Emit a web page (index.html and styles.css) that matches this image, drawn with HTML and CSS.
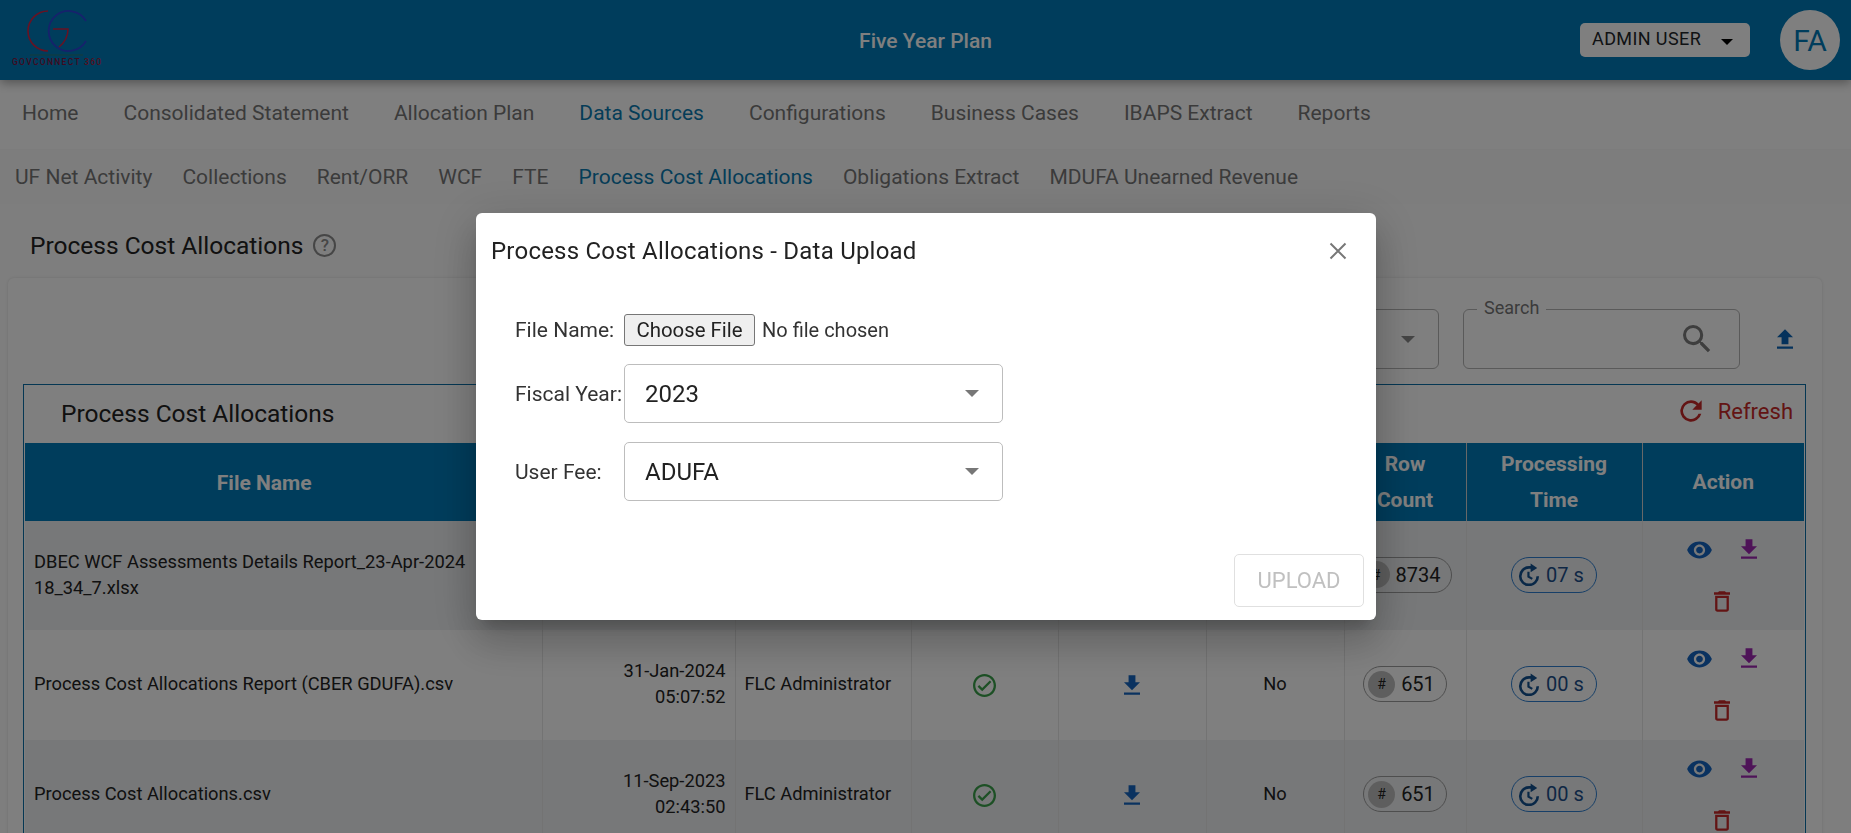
FILE: index.html
```html
<!DOCTYPE html>
<html lang="en">
<head>
    <meta charset="UTF-8">
    <meta name="viewport" content="width=device-width, initial-scale=1.0">
    <title>Five Year Plan</title>
    <link rel="stylesheet" href="styles.css">
</head>
<body>
    <svg class="icon-defs" width="0" height="0">
        <defs>
            <symbol id="i-eye" viewBox="1 4 22 16"><path d="M12 4.500C7 4.500 2.730 7.610 1 12c1.730 4.390 6 7.500 11 7.500s9.270-3.110 11-7.500c-1.730-4.390-6-7.500-11-7.500zM12 17c-2.760 0-5-2.240-5-5s2.240-5 5-5 5 2.240 5 5-2.240 5-5 5zm0-8c-1.660 0-3 1.340-3 3s1.340 3 3 3 3-1.340 3-3-1.340-3-3-3z"/></symbol>
            <symbol id="i-down" viewBox="5 3 14 17"><path d="M19 9h-4V3H9v6H5l7 7 7-7zM5 18v2h14v-2H5z"/></symbol>
            <symbol id="i-up" viewBox="5 3 14 17"><path d="M9 16h6v-6h4l-7-7-7 7h4v6zm-4 2h14v2H5v-2z"/></symbol>
            <symbol id="i-trash" viewBox="5 3 14 18"><path d="M6 19c0 1.100.9 2 2 2h8c1.100 0 2-.9 2-2V7H6v12zM8 9h8v10H8V9zm7.500-5l-1-1h-5l-1 1H5v2h14V4h-3.500z"/></symbol>
            <symbol id="i-check" viewBox="2 2 20 20"><path d="M12 2C6.480 2 2 6.480 2 12s4.480 10 10 10 10-4.480 10-10S17.520 2 12 2zm0 18c-4.410 0-8-3.590-8-8s3.590-8 8-8 8 3.590 8 8-3.590 8-8 8zm4.590-12.420L10 14.170l-2.590-2.580L6 13l4 4 8-8-1.410-1.420z"/></symbol>
            <symbol id="i-timer" viewBox="2 1 20 21">
                <path d="M20 13a8 8 0 1 1-8-8h2.500" fill="none" stroke="currentColor" stroke-width="2.400"/>
                <path d="M13.500 1.500l6 4-6 4z" fill="currentColor"/>
                <path d="M11.500 9v4.500l3.500 2" fill="none" stroke="currentColor" stroke-width="2"/>
            </symbol>
        </defs>
    </svg>

    <header class="topbar">
        <div class="logo">
            <svg width="90" height="50" viewBox="0 0 90 50" fill="none">
                <path d="M36 3A20 20 0 1 0 36 43" stroke="#d02444" stroke-width="1.600"/>
                <path d="M74 13A20 20 0 1 0 74 33" stroke="#2c44d8" stroke-width="1.800"/>
                <path d="M41 21h15c0 8-4 14-9 18" stroke="#d02444" stroke-width="1.500"/>
                <path d="M18 47h53" stroke="#1c7a8c" stroke-width="1.500"/>
            </svg>
            <span class="logo-text">GOVCONNECT <em>360</em></span>
        </div>
        <div class="app-title">Five Year Plan</div>
        <div class="user-area">
            <div class="user-btn"><span>ADMIN USER</span><i class="caret"></i></div>
            <div class="avatar">FA</div>
        </div>
    </header>

    <nav class="nav-main">
        <a>Home</a>
        <a>Consolidated Statement</a>
        <a>Allocation Plan</a>
        <a class="active">Data Sources</a>
        <a>Configurations</a>
        <a>Business Cases</a>
        <a>IBAPS Extract</a>
        <a>Reports</a>
    </nav>
    <nav class="nav-sub">
        <a>UF Net Activity</a>
        <a>Collections</a>
        <a>Rent/ORR</a>
        <a>WCF</a>
        <a>FTE</a>
        <a class="active">Process Cost Allocations</a>
        <a>Obligations Extract</a>
        <a>MDUFA Unearned Revenue</a>
    </nav>

    <main class="content">
        <div class="page-title">
            <h1>Process Cost Allocations</h1>
            <span class="help">?</span>
        </div>

        <section class="card">
            <div class="filters">
                <div class="field field-select"><i class="caret caret-dark"></i></div>
                <div class="field field-search">
                    <span class="field-label">Search</span>
                    <svg width="28" height="28" viewBox="3 3 18 18" fill="#7c7c7c"><path d="M15.500 14h-.79l-.28-.27A6.470 6.470 0 0 0 16 9.500 6.500 6.500 0 1 0 9.500 16c1.610 0 3.090-.59 4.230-1.570l.27.28v.79l5 4.990L20.490 19l-4.990-5zm-6 0C7.010 14 5 11.990 5 9.500S7.010 5 9.500 5 14 7.010 14 9.500 11.990 14 9.500 14z"/></svg>
                </div>
                <svg class="upload-icon" width="16" height="20"><use href="#i-up"/></svg>
            </div>

            <div class="table-box">
                <div class="table-head">
                    <h2>Process Cost Allocations</h2>
                    <div class="refresh">
                        <svg width="22" height="24" viewBox="4 3 16 18" fill="#c62828"><path d="M17.650 6.350A7.960 7.960 0 0 0 12 4a8 8 0 1 0 7.730 10h-2.080A6 6 0 1 1 12 6c1.660 0 3.140.69 4.220 1.780L13 11h7V4l-2.350 2.350z"/></svg>
                        <span>Refresh</span>
                    </div>
                </div>
                <table class="grid">
                    <colgroup>
                        <col class="c-file"><col class="c-date"><col class="c-user"><col class="c-status"><col class="c-dl"><col class="c-flag"><col class="c-rows"><col class="c-time"><col class="c-action">
                    </colgroup>
                    <thead>
                        <tr>
                            <th>File Name</th><th></th><th></th><th></th><th></th><th></th>
                            <th>Row<br>Count</th><th>Processing<br>Time</th><th>Action</th>
                        </tr>
                    </thead>
                    <tbody>
                        <tr class="row-first">
                            <td>DBEC WCF Assessments Details Report_23-Apr-2024 18_34_7.xlsx</td>
                            <td></td><td></td><td></td><td></td><td></td>
                            <td class="center"><span class="pill"><b>#</b>8734</span></td>
                            <td class="center"><span class="pill pill-time"><svg width="22" height="23"><use href="#i-timer"/></svg>07 s</span></td>
                            <td class="actions">
                                <svg class="a-eye" width="25" height="18"><use href="#i-eye"/></svg>
                                <svg class="a-get" width="16" height="20"><use href="#i-down"/></svg>
                                <svg class="a-del" width="16" height="21"><use href="#i-trash"/></svg>
                            </td>
                        </tr>
                        <tr>
                            <td>Process Cost Allocations Report (CBER GDUFA).csv</td>
                            <td class="date">31-Jan-2024<br>05:07:52</td>
                            <td>FLC Administrator</td>
                            <td class="center"><svg class="ok" width="23" height="23"><use href="#i-check"/></svg></td>
                            <td class="center"><svg class="dl" width="16" height="20"><use href="#i-down"/></svg></td>
                            <td class="center">No</td>
                            <td class="center"><span class="pill"><b>#</b>651</span></td>
                            <td class="center"><span class="pill pill-time"><svg width="22" height="23"><use href="#i-timer"/></svg>00 s</span></td>
                            <td class="actions">
                                <svg class="a-eye" width="25" height="18"><use href="#i-eye"/></svg>
                                <svg class="a-get" width="16" height="20"><use href="#i-down"/></svg>
                                <svg class="a-del" width="16" height="21"><use href="#i-trash"/></svg>
                            </td>
                        </tr>
                        <tr>
                            <td>Process Cost Allocations.csv</td>
                            <td class="date">11-Sep-2023<br>02:43:50</td>
                            <td>FLC Administrator</td>
                            <td class="center"><svg class="ok" width="23" height="23"><use href="#i-check"/></svg></td>
                            <td class="center"><svg class="dl" width="16" height="20"><use href="#i-down"/></svg></td>
                            <td class="center">No</td>
                            <td class="center"><span class="pill"><b>#</b>651</span></td>
                            <td class="center"><span class="pill pill-time"><svg width="22" height="23"><use href="#i-timer"/></svg>00 s</span></td>
                            <td class="actions">
                                <svg class="a-eye" width="25" height="18"><use href="#i-eye"/></svg>
                                <svg class="a-get" width="16" height="20"><use href="#i-down"/></svg>
                                <svg class="a-del" width="16" height="21"><use href="#i-trash"/></svg>
                            </td>
                        </tr>
                    </tbody>
                </table>
            </div>
        </section>
    </main>

    <div class="backdrop"></div>

    <div class="modal">
        <div class="modal-head">
            <h3>Process Cost Allocations - Data Upload</h3>
            <svg class="close" width="18" height="18" viewBox="0 0 18 18"><path d="M1.500 1.500l15 15M16.500 1.500l-15 15" stroke="#777" stroke-width="2" fill="none"/></svg>
        </div>
        <div class="modal-body">
            <div class="form-row row-file">
                <label>File Name:</label>
                <button class="file-btn" type="button">Choose File</button>
                <span class="file-none">No file chosen</span>
            </div>
            <div class="form-row">
                <label>Fiscal Year:</label>
                <div class="select-box"><span>2023</span><i class="caret caret-grey"></i></div>
            </div>
            <div class="form-row">
                <label>User Fee:</label>
                <div class="select-box"><span>ADUFA</span><i class="caret caret-grey"></i></div>
            </div>
        </div>
        <div class="modal-foot">
            <button class="upload-btn" type="button" disabled>UPLOAD</button>
        </div>
    </div>
</body>
</html>
```

FILE: styles.css
```css
* {
    box-sizing: border-box;
}
html, body {
    height: 100%;
    overflow: hidden;
}
body {
    margin: 0;
    font-family: Roboto, Arial, sans-serif;
    background: #fff;
    color: #212529;
}
.icon-defs {
    position: absolute;
}

/* top bar */
.topbar {
    height: 80px;
    background: #007ab8;
    display: flex;
    align-items: center;
    justify-content: space-between;
    padding: 0 11px 0 12px;
    box-shadow: 0 3px 10px rgba(0, 0, 0, .35);
    position: relative;
}
.logo {
    width: 90px;
    align-self: flex-start;
    margin-top: 8px;
    display: flex;
    flex-direction: column;
}
.logo svg {
    display: block;
}
.logo-text {
    font-size: 8.500px;
    line-height: 9px;
    letter-spacing: 1.300px;
    color: #801440;
    white-space: nowrap;
    font-weight: 500;
}
.logo-text em {
    font-style: normal;
    color: #a81c3c;
}
.app-title {
    font-size: 21px;
    font-weight: 500;
    color: #fff;
    position: absolute;
    left: 0;
    right: 0;
    padding-top: 2px;
    text-align: center;
    pointer-events: none;
}
.user-area {
    display: flex;
    align-items: center;
    gap: 30px;
}
.user-btn {
    width: 170px;
    height: 34px;
    background: #fff;
    border-radius: 5px;
    display: flex;
    align-items: center;
    padding: 0 13px 3px 12px;
    font-size: 18px;
    letter-spacing: .4px;
    justify-content: space-between;
}
.caret {
    display: inline-block;
    width: 0;
    height: 0;
    border-left: 6px solid transparent;
    border-right: 6px solid transparent;
    border-top: 6px solid #000;
}
.user-btn .caret {
    margin-top: 6px;
    margin-right: 4px;
}
.avatar {
    width: 60px;
    height: 60px;
    border-radius: 50%;
    background: #fff;
    color: #007ab8;
    font-size: 30px;
    display: flex;
    align-items: center;
    justify-content: center;
}

/* navigation */
.nav-main, .nav-sub {
    display: flex;
    align-items: center;
    color: #777;
    font-size: 21px;
}
.nav-main {
    height: 69px;
    gap: 45px;
    padding: 0 0 4px 22px;
}
.nav-sub {
    height: 55px;
    gap: 30px;
    padding: 0 0 0 15px;
    background: #fbfbfb;
    border-top: 1px solid #f8f8f8;
}
.nav-main a.active, .nav-sub a.active {
    color: #0a7ab0;
}

/* page */
.content {
    background: #fcfcfc;
}
.page-title {
    height: 74px;
    display: flex;
    align-items: center;
    padding: 8px 0 0 30px;
}
.page-title h1 {
    margin: 0;
    font-size: 24.500px;
    font-weight: 400;
    color: #222;
}
.help {
    width: 23px;
    height: 23px;
    margin-left: 10px;
    border: 2px solid #8c8c8c;
    border-radius: 50%;
    color: #8c8c8c;
    font-size: 17px;
    font-weight: 500;
    display: flex;
    align-items: center;
    justify-content: center;
}
.card {
    margin: 0 29px 0 8px;
    background: #fff;
    padding: 0 16px 0 15px;
    border-radius: 6px 6px 0 0;
    box-shadow: 0 0 3px rgba(0, 0, 0, .12);
}
.filters {
    height: 106px;
    display: flex;
    justify-content: flex-end;
    align-items: flex-start;
    padding-top: 31px;
}
.field {
    height: 60px;
    border: 1px solid #b4b4b4;
    border-radius: 6px;
    position: relative;
}
.field-select {
    width: 280px;
    margin-right: 24px;
    display: flex;
    align-items: center;
    justify-content: flex-end;
    padding-right: 23px;
}
.caret-dark {
    border-top-color: #8a8a8a;
    border-left-width: 7px;
    border-right-width: 7px;
    border-top-width: 7px;
}
.field-search {
    width: 277px;
    margin-right: 37px;
    display: flex;
    align-items: center;
    justify-content: flex-end;
    padding-right: 28px;
}
.field-label {
    position: absolute;
    top: -13px;
    left: 13px;
    padding: 0 7px;
    background: #fff;
    font-size: 18px;
    color: #777;
}
.upload-icon {
    fill: #0b64b8;
    margin: 20px 13px 0 0;
}
.table-box {
    border: 1px solid #0a6ea6;
    border-bottom: 0;
}
.table-head {
    height: 58px;
    display: flex;
    align-items: center;
    justify-content: space-between;
    padding: 0 12px 2px 37px;
}
.table-head h2 {
    margin: 0;
    font-size: 24.500px;
    font-weight: 400;
    color: #222;
}
.refresh {
    display: flex;
    align-items: center;
    gap: 16px;
    color: #c62828;
    font-size: 22px;
    margin-top: -4px;
}
.grid {
    width: 1779px;
    margin-left: 1px;
    table-layout: fixed;
    border-collapse: collapse;
    font-size: 18.300px;
}
.c-file { width: 517px; }
.c-date { width: 193px; }
.c-user { width: 176px; }
.c-status { width: 147px; }
.c-dl { width: 148px; }
.c-flag { width: 138px; }
.c-rows { width: 122px; }
.c-time { width: 176px; }
.c-action { width: 162px; }
.grid th {
    height: 78px;
    background: #007ab8;
    color: #fff;
    font-size: 21px;
    font-weight: 700;
    line-height: 36px;
    border-left: 1px solid #d0d0d0;
    padding: 0;
}
.grid th:first-child {
    border-left: 0;
    padding: 2px 38px 0 0;
}
.grid td {
    height: 110px;
    padding: 0 9px 2px;
    line-height: 26px;
    border-left: 1px solid #e6e6e6;
    color: #222;
}
.grid td:first-child {
    border-left: 0;
}
.grid tbody tr:nth-child(odd) td {
    background: #eef0f2;
}
.grid .row-first td {
    height: 109px;
}
.grid .date {
    text-align: right;
}
.grid .center {
    text-align: center;
    padding: 0 0 2px;
}
.pill {
    display: inline-flex;
    align-items: center;
    height: 36px;
    padding: 0 11px 0 4px;
    border: 1px solid #9c9c9c;
    border-radius: 18px;
    font-size: 20px;
    vertical-align: middle;
}
.pill b {
    width: 27px;
    height: 27px;
    border-radius: 50%;
    background: #bdbdbd;
    font-size: 14px;
    font-weight: 400;
    display: flex;
    align-items: center;
    justify-content: center;
    margin-right: 6px;
}
.pill-time {
    border-color: #2f7fd0;
    color: #1d4f8a;
    padding: 0 12px 0 6px;
}
.pill-time svg {
    color: #12508f;
    margin-right: 6px;
}
.ok {
    fill: #3aa04a;
    vertical-align: middle;
}
.dl {
    fill: #1565c0;
    vertical-align: middle;
}
.grid .actions {
    padding: 0 2px 0 0;
    text-align: center;
    vertical-align: top;
    font-size: 0;
}
.actions svg {
    display: inline-block;
}
.a-eye {
    fill: #1565c0;
    margin: 20px 29px 0 0;
}
.a-get {
    fill: #9c27b0;
}
.actions .a-del {
    fill: #c62828;
    display: block;
    margin: 19px auto 0;
}

/* modal */
.backdrop {
    position: fixed;
    inset: 0;
    background: rgba(0, 0, 0, .5);
}
.modal {
    position: fixed;
    top: 213px;
    left: 476px;
    width: 900px;
    height: 407px;
    background: #fff;
    border-radius: 6px;
    box-shadow: 0 11px 15px -7px rgba(0, 0, 0, .2), 0 24px 38px 3px rgba(0, 0, 0, .14), 0 9px 46px 8px rgba(0, 0, 0, .12);
    display: flex;
    flex-direction: column;
}
.modal-head {
    height: 76px;
    display: flex;
    align-items: center;
    justify-content: space-between;
    padding: 0 29px 0 15px;
}
.modal-head h3 {
    margin: 0;
    font-size: 24px;
    font-weight: 400;
    letter-spacing: .22px;
    color: #222;
}
.modal-body {
    padding: 25px 0 0 39px;
    display: flex;
    flex-direction: column;
    gap: 19px;
    flex: 1;
}
.form-row {
    display: flex;
    align-items: center;
}
.form-row label {
    width: 109px;
    font-size: 21px;
    color: #333;
    white-space: nowrap;
}
.row-file {
    height: 32px;
    margin-bottom: -1px;
}
.file-btn {
    width: 131px;
    height: 32px;
    padding: 0;
    font-family: Roboto, Arial, sans-serif;
    font-size: 20.400px;
    color: #222;
    background: #efefef;
    border: 1px solid #767676;
    border-radius: 3px;
}
.file-none {
    margin-left: 7px;
    font-size: 20px;
    color: #333;
}
.select-box {
    width: 379px;
    height: 59px;
    border: 1px solid #bdbdbd;
    border-radius: 5px;
    display: flex;
    align-items: center;
    justify-content: space-between;
    padding: 0 23px 0 20px;
    font-size: 24px;
    color: #222;
}
.caret-grey {
    border-top-color: #777;
    border-left-width: 7.500px;
    border-right-width: 7.500px;
    border-top-width: 7px;
}
.modal-foot {
    display: flex;
    justify-content: flex-end;
    padding: 0 12px 13px 0;
}
.upload-btn {
    width: 130px;
    height: 53px;
    background: #fff;
    border: 1px solid #e0e0e0;
    border-radius: 5px;
    font-family: Roboto, Arial, sans-serif;
    font-size: 22px;
    color: #c0c0c0;
}
```
